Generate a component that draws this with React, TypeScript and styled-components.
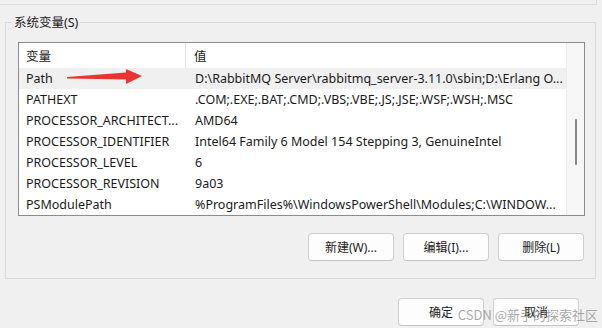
import React from "react";
import styled, { createGlobalStyle } from "styled-components";

const GlobalStyle = createGlobalStyle`
  html, body {
    margin: 0;
    padding: 0;
    background: #f0f0f0;
  }
  body {
    font-family: "Noto Sans", "Noto Sans CJK SC", sans-serif;
    font-size: 12px;
    color: #1a1a1a;
  }
`;

type Variable = { name: string; value: string };

const variables: Variable[] = [
  { name: "Path", value: "D:\\RabbitMQ Server\\rabbitmq_server-3.11.0\\sbin;D:\\Erlang O..." },
  { name: "PATHEXT", value: ".COM;.EXE;.BAT;.CMD;.VBS;.VBE;.JS;.JSE;.WSF;.WSH;.MSC" },
  { name: "PROCESSOR_ARCHITECT...", value: "AMD64" },
  { name: "PROCESSOR_IDENTIFIER", value: "Intel64 Family 6 Model 154 Stepping 3, GenuineIntel" },
  { name: "PROCESSOR_LEVEL", value: "6" },
  { name: "PROCESSOR_REVISION", value: "9a03" },
  { name: "PSModulePath", value: "%ProgramFiles%\\WindowsPowerShell\\Modules;C:\\WINDOW..." },
];

export default function App() {
  return (
    <>
      <GlobalStyle />
      <Window>
        <UpperGroup />
        <Group>
          <Legend>系统变量(S)</Legend>
          <List>
            <Table>
              <HeaderRow>
                <HeaderCell divider>变量</HeaderCell>
                <HeaderCell>值</HeaderCell>
              </HeaderRow>
              {variables.map((v, i) => (
                <Row key={v.name} selected={i === 0}>
                  <NameCell>{v.name}</NameCell>
                  <ValueCell>{v.value}</ValueCell>
                </Row>
              ))}
            </Table>
            <Scrollbar>
              <Thumb />
            </Scrollbar>
            <Arrow viewBox="0 0 80 20" width="80" height="20">
              <polygon
                points="1,9 60,4.5 60,1 76,8 60,16 60,11.5 1,10.5"
                fill="#e8352f"
              />
            </Arrow>
          </List>
          <GroupButtons>
            <Button>新建(W)...</Button>
            <Button>编辑(I)...</Button>
            <Button>删除(L)</Button>
          </GroupButtons>
        </Group>
        <DialogButtons>
          <Button>确定</Button>
          <Button>取消</Button>
        </DialogButtons>
        <Watermark>CSDN @新手的探索社区</Watermark>
      </Window>
    </>
  );
}

const Window = styled.div`
  position: relative;
  width: 602px;
  height: 328px;
  overflow: hidden;
`;

const UpperGroup = styled.div`
  width: 596px;
  height: 4px;
  border-right: 1px solid #dcdcdc;
  border-bottom: 1px solid #dcdcdc;
`;

const Group = styled.fieldset`
  box-sizing: border-box;
  margin: 9px 0 0 5px;
  padding: 0;
  width: 591px;
  height: 265px;
  border: 1px solid #dadada;
  border-radius: 0;
`;

const Legend = styled.legend`
  margin-left: 6px;
  padding: 0 2px;
  line-height: 17px;
  font-size: 12.5px;
  color: #1a1a1a;
`;

const List = styled.div`
  position: relative;
  box-sizing: border-box;
  margin: 11px 0 0 12px;
  width: 567px;
  height: 174px;
  border: 1px solid #8c8c8c;
  background: #ffffff;
  display: grid;
  grid-template-columns: 1fr 18px;
  font-size: 12.5px;
`;

const Table = styled.div`
  display: flex;
  flex-direction: column;
  overflow: hidden;
`;

const HeaderRow = styled.div`
  display: grid;
  grid-template-columns: 167px 1fr;
  height: 25px;
`;

const HeaderCell = styled.div<{ divider?: boolean }>`
  display: flex;
  align-items: center;
  padding-left: ${(p) => (p.divider ? "7px" : "8px")};
  border-right: ${(p) => (p.divider ? "1px solid #e5e5e5" : "none")};
`;

const Row = styled.div<{ selected?: boolean }>`
  display: grid;
  grid-template-columns: 167px 1fr;
  height: 21px;
  align-items: center;
  background: ${(p) => (p.selected ? "#f0f0f0" : "transparent")};
`;

const NameCell = styled.div`
  padding-left: 7px;
  white-space: nowrap;
  overflow: hidden;
`;

const ValueCell = styled.div`
  padding-left: 9px;
  white-space: nowrap;
  overflow: hidden;
`;

const Scrollbar = styled.div`
  position: relative;
  background: #f7f7f7;
  border-left: 1px solid #ececec;
`;

const Thumb = styled.div`
  position: absolute;
  left: 8px;
  top: 76px;
  width: 2px;
  height: 46px;
  border-radius: 1px;
  background: #8a8a8a;
`;

const Arrow = styled.svg`
  position: absolute;
  left: 47px;
  top: 25px;
`;

const GroupButtons = styled.div`
  display: flex;
  justify-content: flex-end;
  gap: 9px;
  margin-top: 17px;
  padding-right: 11px;
`;

const Button = styled.button`
  box-sizing: border-box;
  width: 86px;
  height: 28px;
  padding: 0;
  border: 1px solid #d0d0d0;
  border-bottom-color: #c4c4c4;
  border-radius: 4px;
  background: #fdfdfd;
  font-family: "Noto Sans", "Noto Sans CJK SC", sans-serif;
  font-size: 12px;
  color: #1a1a1a;
`;

const DialogButtons = styled.div`
  display: flex;
  justify-content: flex-end;
  gap: 9px;
  margin-top: 19px;
  padding-right: 23px;
`;

const Watermark = styled.div`
  position: absolute;
  right: 4px;
  bottom: 4px;
  font-family: "Noto Sans CJK SC", sans-serif;
  font-size: 13px;
  color: rgba(140, 140, 140, 0.75);
  white-space: nowrap;
`;
